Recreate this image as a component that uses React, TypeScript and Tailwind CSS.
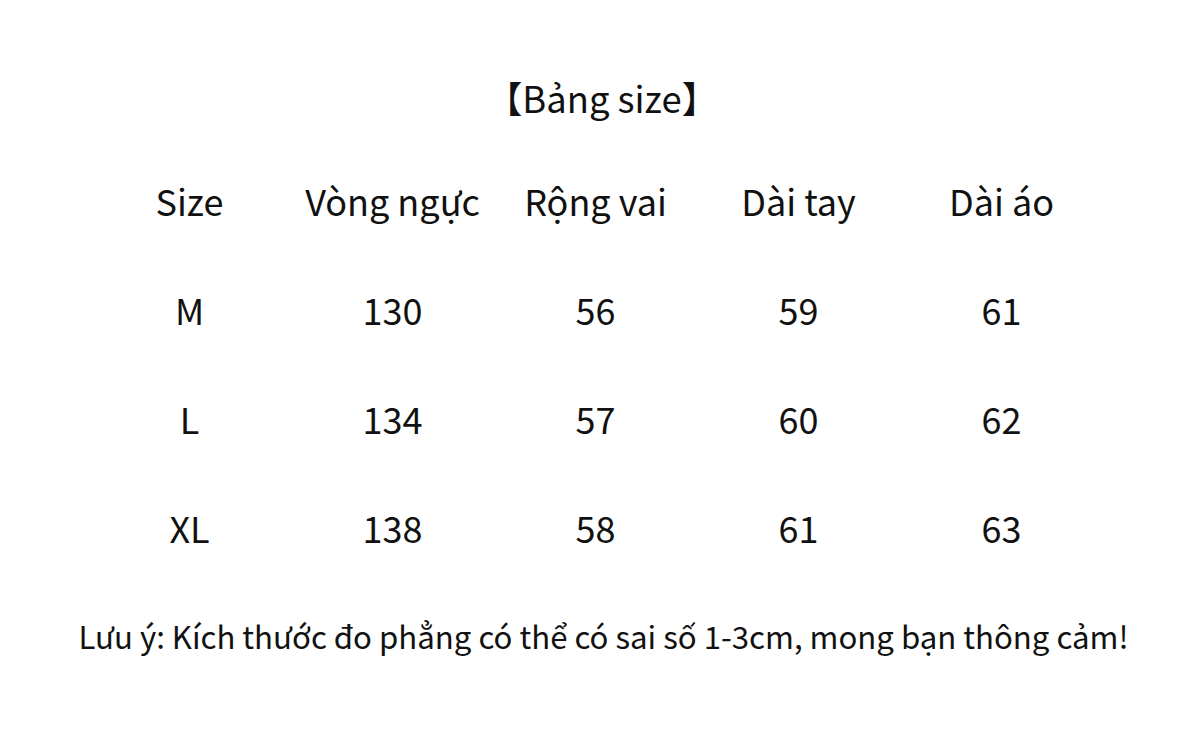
import React from "react";

const headers = ["Size", "Vòng ngực", "Rộng vai", "Dài tay", "Dài áo"];
const rows = [
  ["M", "130", "56", "59", "61"],
  ["L", "134", "57", "60", "62"],
  ["XL", "138", "58", "61", "63"],
];

export default function App() {
  return (
    <div
      className="w-[1200px] h-[755px] bg-white text-[#111111] overflow-hidden"
      style={{ fontFamily: '"Noto Sans CJK SC", "Noto Sans", sans-serif' }}
    >
      <div className="mt-[67px] h-[60px] pl-[4px] flex items-center justify-center text-[36.4px] leading-none">
        【Bảng size】
      </div>
      <div className="mt-[43px] h-[60px] pl-[88px] grid grid-cols-[repeat(5,203px)] items-center text-[36px] leading-none">
        {headers.map((h) => (
          <div key={h} className="text-center whitespace-nowrap">
            {h}
          </div>
        ))}
      </div>
      {rows.map((r) => (
        <div
          key={r[0]}
          className="mt-[49px] h-[60px] pl-[88px] grid grid-cols-[repeat(5,203px)] items-center text-[36px] leading-none"
        >
          {r.map((c, i) => (
            <div key={i} className="text-center">
              {c}
            </div>
          ))}
        </div>
      ))}
      <div className="mt-[49px] h-[60px] pl-[7px] flex items-center justify-center text-[31.2px] leading-none whitespace-nowrap">
        Lưu ý: Kích thước đo phẳng có thể có sai số 1-3cm, mong bạn thông cảm!
      </div>
    </div>
  );
}
